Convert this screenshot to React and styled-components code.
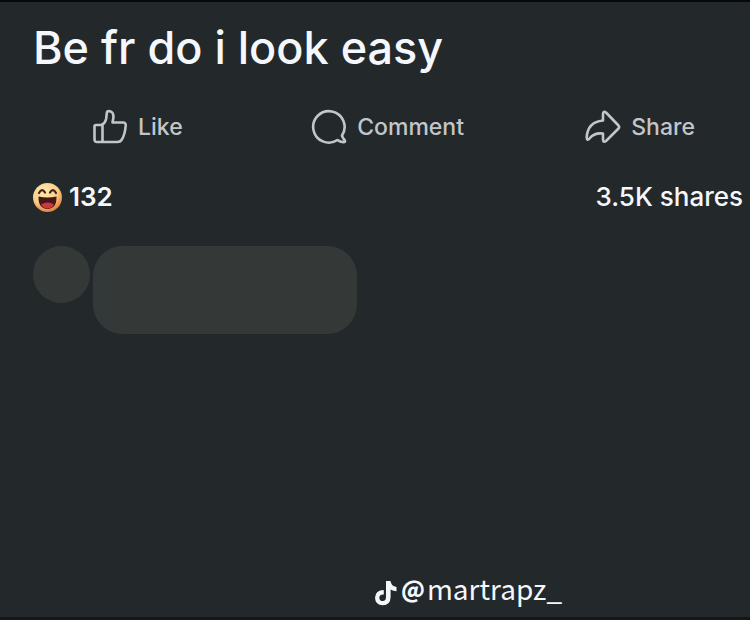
import styled, { createGlobalStyle } from "styled-components";

const GlobalStyle = createGlobalStyle`
  * {
    box-sizing: border-box;
  }

  body {
    margin: 0;
    background: #23282b;
    color: #f4f7fb;
    font-family: Inter, "Liberation Sans", sans-serif;
  }
`;

const Page = styled.main`
  min-height: 100vh;
  display: flex;
  flex-direction: column;
  border-top: 2px solid #08090c;
  border-bottom: 3px solid #15151a;
`;

const Title = styled.h1`
  margin: 16px 0 0;
  padding: 0 33px;
  font-size: 45px;
  line-height: 60px;
  font-weight: 500;
`;

const Actions = styled.div`
  display: grid;
  grid-template-columns: 4fr 5fr auto;
  margin-top: 29px;
  padding: 0 55px 0 92px;
`;

const Action = styled.button`
  display: flex;
  align-items: center;
  gap: 10px;
  height: 40px;
  padding: 0;
  border: 0;
  background: none;
  color: #c3c6c9;
  font-family: inherit;
  font-size: 23px;
  font-weight: 500;
  cursor: pointer;
`;

const Icon = styled.svg`
  width: 36px;
  height: 36px;
  flex: none;
  fill: none;
  stroke: currentColor;
  stroke-width: 2.6;
  stroke-linejoin: round;
  stroke-linecap: round;
`;

const Stats = styled.div`
  display: flex;
  justify-content: space-between;
  align-items: center;
  margin-top: 34px;
  padding: 0 7px 0 32px;
  font-size: 26px;
  line-height: 32px;
  font-weight: 500;
`;

const Reactions = styled.div`
  display: flex;
  align-items: center;
  gap: 6px;
  font-weight: 600;
`;

const Emoji = styled.svg`
  width: 31px;
  height: 31px;
`;

const Comment = styled.div`
  display: flex;
  align-items: flex-start;
  gap: 3px;
  margin-top: 33px;
  padding: 0 33px;
`;

const Avatar = styled.div`
  width: 57px;
  height: 57px;
  border-radius: 50%;
  background: #343837;
`;

const Bubble = styled.div`
  width: 264px;
  height: 88px;
  border-radius: 30px;
  background: linear-gradient(90deg, #33383b, #343836 12%);
`;

const Watermark = styled.footer`
  display: flex;
  align-items: flex-end;
  justify-content: center;
  gap: 3px;
  margin-top: auto;
  padding: 0 0 11px 186px;
  font-family: "Noto Sans CJK SC", sans-serif;
  font-size: 28px;
  line-height: 36px;
`;

const Note = styled.svg`
  width: 24px;
  height: 26px;
  fill: currentColor;
`;

const Handle = styled.span`
  display: flex;
  align-items: center;
  gap: 2px;
`;

const At = styled.span`
  font-size: 23px;
  font-weight: 900;
`;

const actions = [
  {
    label: "Like",
    icon: (
      <path d="M2.5 17.5Q2.5 16 4 16H9Q13 15 14.2 9.5L14.8 4Q15 2 17 2Q21.5 2.5 21.5 8L20.5 13.5H31Q34 13.5 33.7 16.5Q33 26 29.5 31Q28.3 33 25.5 33H5Q2.5 33 2.5 30.5ZM10.5 16V33" />
    ),
  },
  {
    label: "Comment",
    icon: (
      <path d="M31 26.5A15.7 15.7 0 1 0 26.5 31Q29.5 33.5 33.5 33Q34.5 32.5 33.5 31Q31.5 29 31 26.5Z" />
    ),
  },
  {
    label: "Share",
    icon: (
      <path d="M18 11.5V5Q18.2 1.5 21 3.5L33.5 16.5Q34.8 18 33.5 19.5L21 32Q18.2 34 18 30.5V24.5Q9 23.5 4.5 29.5Q2 32.5 1.7 28.5Q2.5 13 18 11.5Z" />
    ),
  },
];

export default function App() {
  return (
    <>
      <GlobalStyle />
      <Page>
        <Title>Be fr do i look easy</Title>

        <Actions>
          {actions.map(({ label, icon }) => (
            <Action key={label} type="button">
              <Icon viewBox="0 0 36 36" aria-hidden="true">
                {icon}
              </Icon>
              {label}
            </Action>
          ))}
        </Actions>

        <Stats>
          <Reactions>
            <Emoji viewBox="0 0 31 31" aria-hidden="true">
              <defs>
                <radialGradient id="face" cx="0.4" cy="0.3" r="0.75">
                  <stop offset="0" stopColor="#ffeab0" />
                  <stop offset="0.6" stopColor="#f8cf85" />
                  <stop offset="1" stopColor="#e0702f" />
                </radialGradient>
              </defs>
              <circle cx="15.5" cy="15.5" r="14.5" fill="url(#face)" />
              <path
                d="M7 11Q10 5.5 13 10.5M18 10.5Q21 5.5 24 11"
                fill="none"
                stroke="#49221a"
                strokeWidth="2.2"
                strokeLinecap="round"
              />
              <path d="M6.5 14.5Q15.5 16.5 24.5 14.5Q25 26.5 15.5 27Q6 26.5 6.5 14.5Z" fill="#4a1519" />
              <path d="M9 22.5Q15.5 18.5 22 22.5Q20 26.5 15.5 26.5Q11 26.5 9 22.5Z" fill="#c93a3c" />
            </Emoji>
            132
          </Reactions>
          <span>3.5K shares</span>
        </Stats>

        <Comment>
          <Avatar />
          <Bubble />
        </Comment>

        <Watermark>
          <Note viewBox="0 0 24 26" aria-hidden="true">
            <path d="M12 1H16.5Q17.2 6.3 22.5 7V11.3Q19.3 11.2 16.6 9.5V17Q16.5 25 8.7 25.3Q1.3 25 1 17.7Q1.5 10 9.8 10V14.5Q5.6 14.2 5.3 17.7Q5.6 21 8.7 21.1Q12 20.8 12 17Z" />
          </Note>
          <Handle>
            <At>@</At>martrapz_
          </Handle>
        </Watermark>
      </Page>
    </>
  );
}
